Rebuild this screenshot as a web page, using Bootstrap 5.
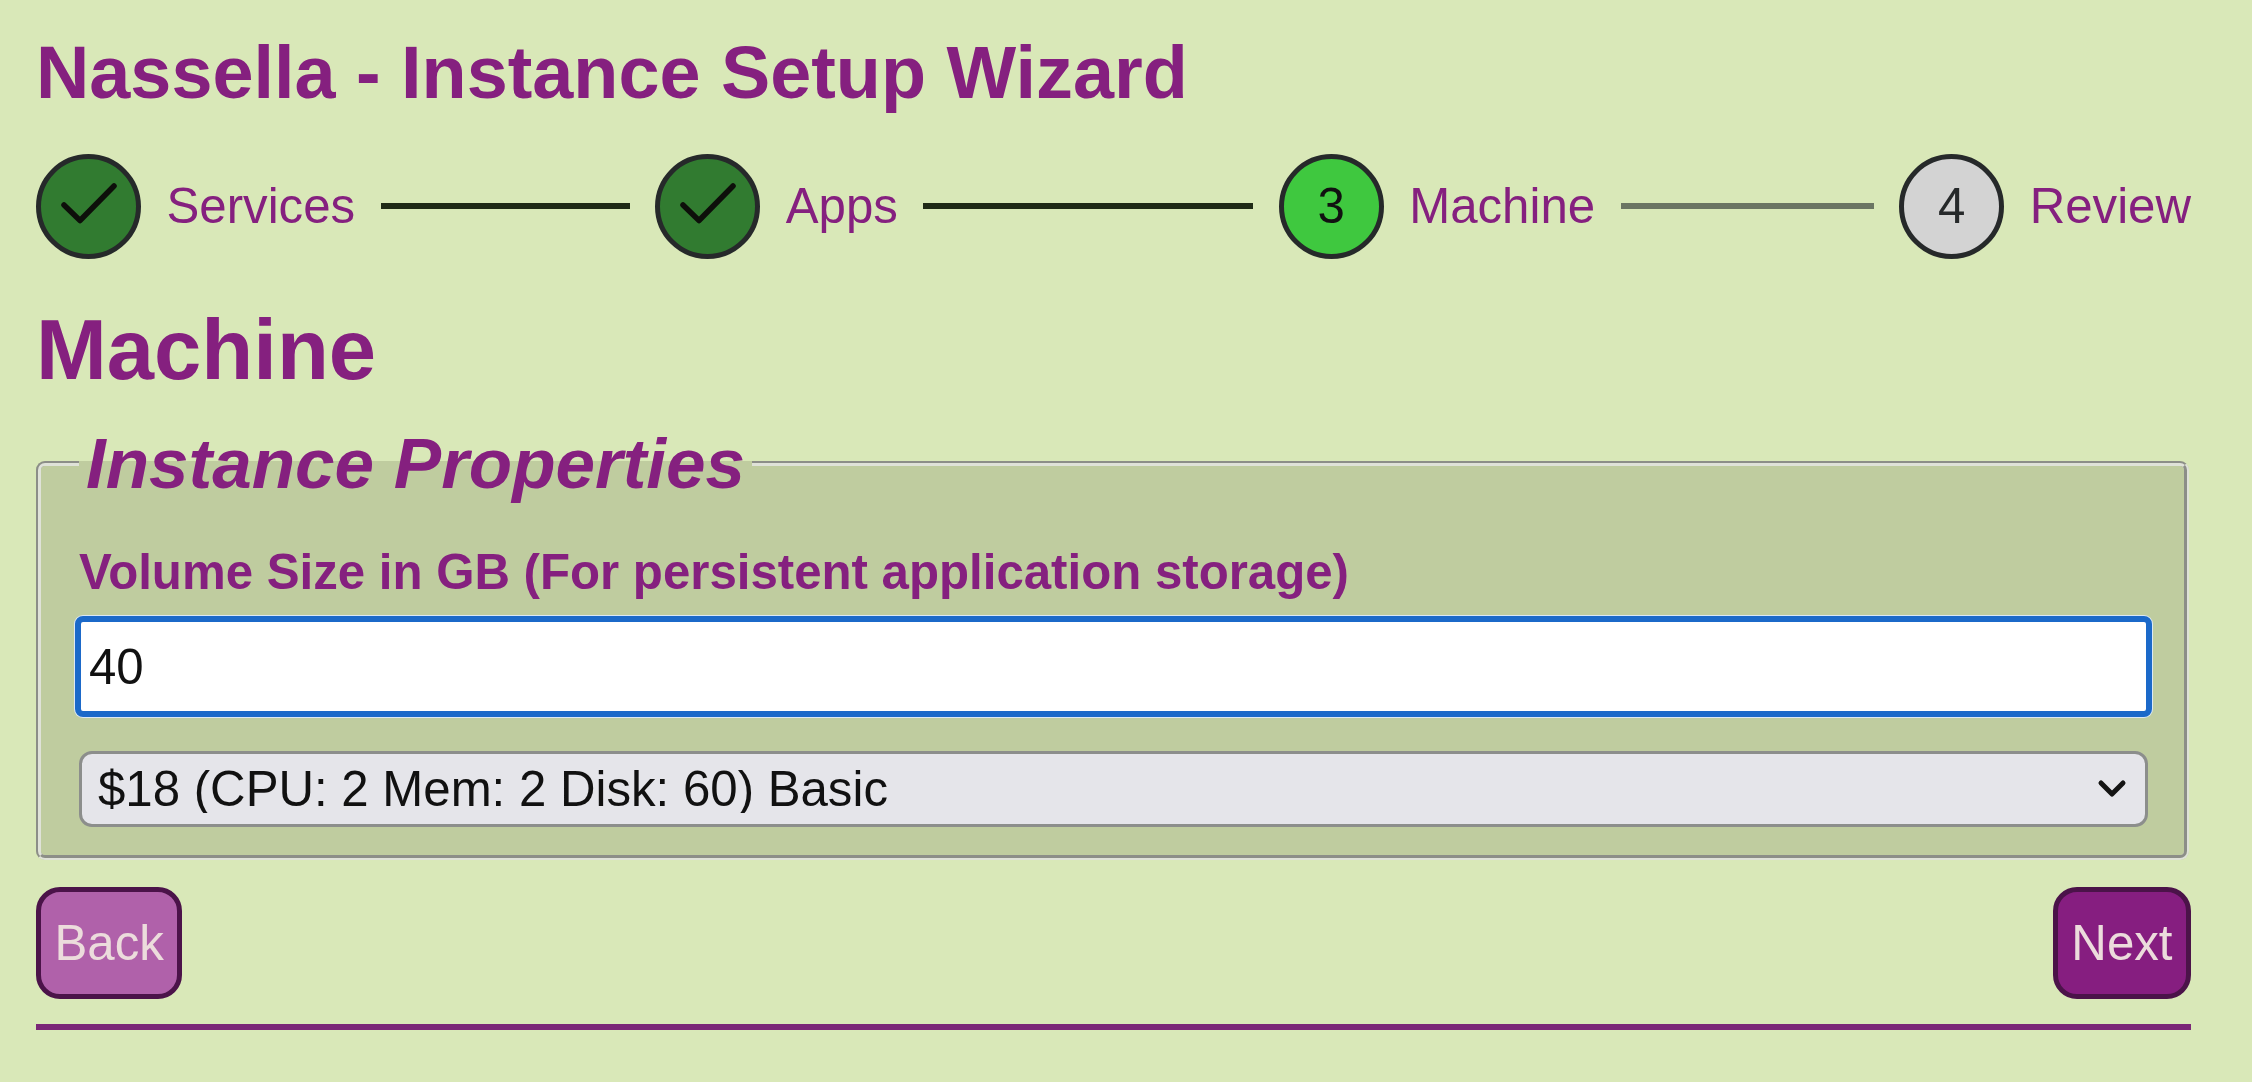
<!DOCTYPE html>
<html lang="en">
<head>
<meta charset="utf-8">
<title>Nassella - Instance Setup Wizard</title>
<link href="https://cdn.jsdelivr.net/npm/bootstrap@5.3.0/dist/css/bootstrap.min.css" rel="stylesheet">
<style>
html, body { height: 100%; }
body { background: #d9e8b8; color: #85207f; font-family: "Liberation Sans", Arial, sans-serif; font-size: 49.2px; padding: 29px 61px 0 36px; overflow: hidden; }
.wiz-title { font-size: 73.8px; font-weight: 700; line-height: 1.2; color: #85207f; margin: 0 0 35px; }
.wiz-steps { gap: 25.5px; height: 107px; }
.wiz-dot { width: 105px; height: 105px; border: 5.5px solid #26292a; border-radius: 50%; color: #111; font-size: 49.2px; flex: none; }
.wiz-done { background: #317b30; }
.wiz-now { background: #3fc83f; }
.wiz-todo { background: #d3d3d3; color: #26292a; }
.wiz-name { line-height: 1; color: #85207f; }
.wiz-line { height: 6px; background: #1f2a16; }
.wiz-line.wiz-idle { background: #6b7563; }
.wiz-grow-a { flex: 250 1 0; }
.wiz-grow-b { flex: 331 1 0; }
.wiz-grow-c { flex: 254 1 0; }
.wiz-sub { font-size: 85px; font-weight: 700; line-height: 1.2; color: #85207f; margin: 39px 0 0; }
.wiz-set { background: #bfcc9f; border: 5px groove #dfe2d8; border-radius: 9px; margin: 20px 2px 0 0; padding: 0 36px 28px 38px; min-width: 0; }
.wiz-legend { float: none; width: auto; font-size: 71px; font-weight: 700; font-style: italic; line-height: 1.2; color: #85207f; padding: 0 7px; margin: 0; }
.wiz-label { display: block; font-size: 49.2px; font-weight: 700; line-height: 1.2; color: #85207f; margin: 36px 0 15px; }
.wiz-input.form-control { background: #fff; border: 6px solid #1b69c9; border-radius: 8px; box-shadow: 0 0 0 1px #dbe8f6; color: #111; font-size: 49.2px; height: 101px; padding: 0 8px; margin-left: -4px; width: calc(100% + 8px); }
.wiz-select.form-select { background-color: #e5e5ea; background-image: url("data:image/svg+xml,%3csvg xmlns='http://www.w3.org/2000/svg' viewBox='0 0 30 20'%3e%3cpolyline points='4,4 15,15 26,4' fill='none' stroke='%23141414' stroke-width='5' stroke-linecap='round' stroke-linejoin='round'/%3e%3c/svg%3e"); border: 3px solid #8c8e8c; border-radius: 13px; color: #111; font-size: 49.2px; line-height: 1; height: 76px; padding: 0 60px 0 16px; margin-top: 34px; background-size: 30px 20px; background-position: right 18px center; }
.wiz-btn.btn { border: 5px solid #4b1349; border-radius: 24px; font-size: 49.2px; line-height: 1; height: 112px; padding: 0 13.5px; color: #ecdcdc; }
.wiz-back.btn, .wiz-back.btn:disabled { background: #b061aa; border-color: #4b1349; color: #ecdcdc; opacity: 1; }
.wiz-next.btn { background: #861e80; }
.wiz-actions { margin-top: 27px; }
.wiz-rule { height: 6px; background: #7a2777; opacity: 1; border: 0; margin: 25px 0 0; }
</style>
</head>
<body>
<h1 class="wiz-title">Nassella - Instance Setup Wizard</h1>
<div class="wiz-steps d-flex align-items-center">
  <div class="wiz-dot wiz-done d-flex align-items-center justify-content-center">
    <svg width="94" height="94" viewBox="-47 -47 94 94" aria-hidden="true"><polyline points="-25,-1 -9,14.5 25,-20" fill="none" stroke="#0d0f0a" stroke-width="5.5" stroke-linecap="round" stroke-linejoin="round"/></svg>
  </div>
  <span class="wiz-name">Services</span>
  <div class="wiz-line wiz-grow-a"></div>
  <div class="wiz-dot wiz-done d-flex align-items-center justify-content-center">
    <svg width="94" height="94" viewBox="-47 -47 94 94" aria-hidden="true"><polyline points="-25,-1 -9,14.5 25,-20" fill="none" stroke="#0d0f0a" stroke-width="5.5" stroke-linecap="round" stroke-linejoin="round"/></svg>
  </div>
  <span class="wiz-name">Apps</span>
  <div class="wiz-line wiz-grow-b"></div>
  <div class="wiz-dot wiz-now d-flex align-items-center justify-content-center">3</div>
  <span class="wiz-name">Machine</span>
  <div class="wiz-line wiz-idle wiz-grow-c"></div>
  <div class="wiz-dot wiz-todo d-flex align-items-center justify-content-center">4</div>
  <span class="wiz-name">Review</span>
</div>
<h2 class="wiz-sub">Machine</h2>
<form>
  <fieldset class="wiz-set">
    <legend class="wiz-legend">Instance Properties</legend>
    <label class="wiz-label" for="volume">Volume Size in GB (For persistent application storage)</label>
    <input class="wiz-input form-control" id="volume" type="text" value="40">
    <select class="wiz-select form-select" aria-label="Machine type">
      <option>$18 (CPU: 2 Mem: 2 Disk: 60) Basic</option>
    </select>
  </fieldset>
  <div class="wiz-actions d-flex justify-content-between">
    <button type="button" class="wiz-btn wiz-back btn">Back</button>
    <button type="button" class="wiz-btn wiz-next btn">Next</button>
  </div>
</form>
<hr class="wiz-rule">
<script src="https://cdn.jsdelivr.net/npm/bootstrap@5.3.0/dist/js/bootstrap.bundle.min.js"></script>
</body>
</html>
